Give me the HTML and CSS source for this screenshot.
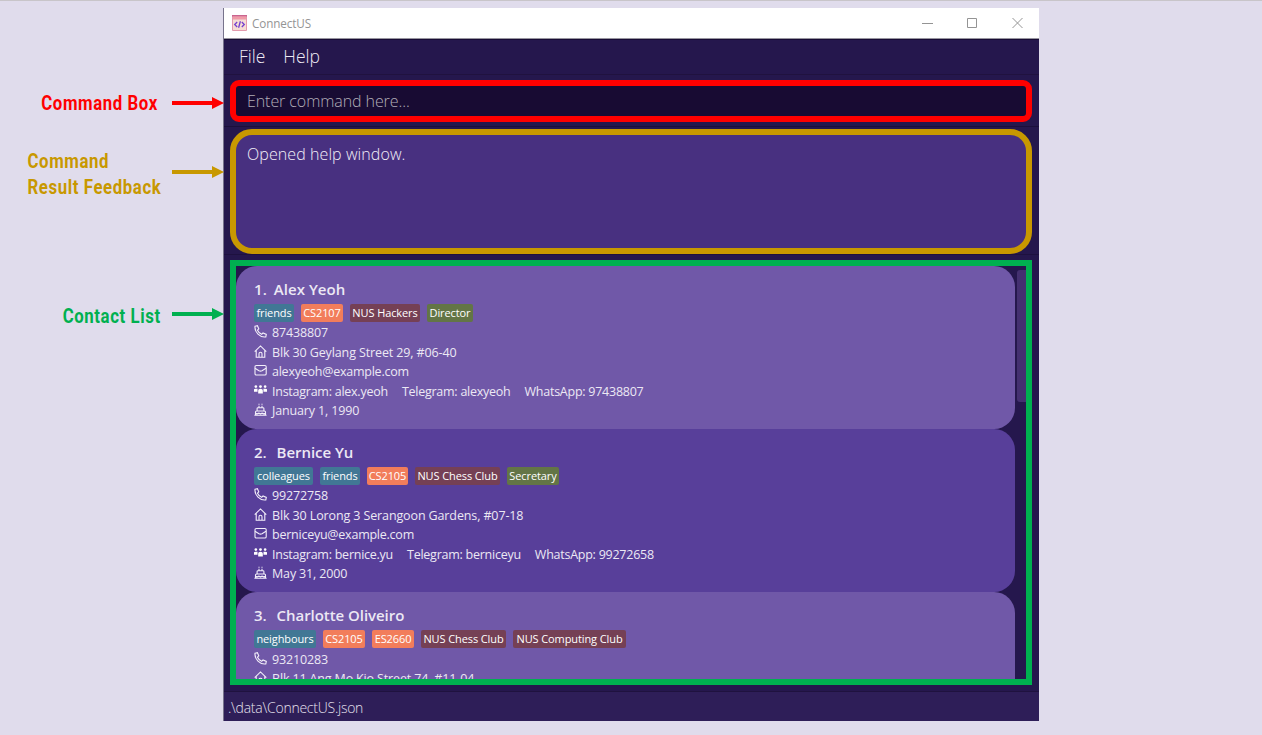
FILE: index.html
```html
<!DOCTYPE html>
<html lang="en">
<head>
<meta charset="utf-8">
<title>ConnectUS</title>
<link rel="stylesheet" href="styles.css">
</head>
<body>
<svg class="defs" width="0" height="0">
  <symbol id="phone" viewBox="0 0 13 13"><path d="M1 1.200 3.400.7 4.800 3.900 3.500 5.200c.8 1.800 2.300 3.300 4.100 4.100L9 8l3.300 1.400-.5 2.500C6 12.700.3 7 1 1.200Z"/></symbol>
  <symbol id="home" viewBox="0 0 13 13"><path d="M.7 6.600 6.500.9l5.800 5.700M2.200 5.400v6.800h8.600V5.400M5 12V8.700a1.500 1.500 0 0 1 3 0V12"/></symbol>
  <symbol id="mail" viewBox="0 0 13 13"><rect x="1" y="1.500" width="11.200" height="9.500" rx="1.300"/><path d="m1 4.300 4 2.400q1.500.8 3 0l4-2.400"/></symbol>
  <symbol id="people" viewBox="0 0 14 13"><g class="solid"><circle cx="2" cy="2.300" r="1.400"/><circle cx="7" cy="2.300" r="1.500"/><circle cx="12" cy="2.300" r="1.400"/><path d="M-.3 7.800V6.200q0-1.700 1.900-1.700h2.200v3.300ZM4.500 9.800V6.500q0-2 2.500-2t2.500 2v3.300ZM10.200 7.800V4.500h2.200q1.900 0 1.900 1.700v1.600Z"/></g></symbol>
  <symbol id="cake" viewBox="0 0 13 13"><path d="M.4 12.300h12.200M1.500 12V9q0-1 1-1h8q1 0 1 1v3M3.100 7.700V5.600q0-.9.900-.9h5q.9 0 .9.900v2.100M1.500 10.200l1.700.6 1.700-.6 1.600.6 1.600-.6 1.700.6 1.700-.6M5 4.300V2.800M8 4.300V2.800M5 1.700V.7M8 1.700V.7"/></symbol>
</svg>

<div class="page">
  <aside class="labels">
    <div class="label label-command"><span class="label-text">Command Box</span><svg class="arrow" viewBox="0 0 52 12"><path d="M0 4h40V0l12 6-12 6V8H0Z"/></svg></div>
    <div class="label label-result"><span class="label-text">Command<br>Result Feedback</span><svg class="arrow" viewBox="0 0 52 12"><path d="M0 4h40V0l12 6-12 6V8H0Z"/></svg></div>
    <div class="label label-list"><span class="label-text">Contact List</span><svg class="arrow" viewBox="0 0 52 12"><path d="M0 4h40V0l12 6-12 6V8H0Z"/></svg></div>
  </aside>

  <main class="window">
    <header class="titlebar">
      <svg class="logo" viewBox="0 0 15 16"><rect width="15" height="16" rx="1" fill="#e39aac"/><rect x="0" y="0" width="15" height="1.500" fill="#c9648f"/><rect x="1" y="1.500" width="13" height="3" fill="#f09aa8"/><rect x="1" y="4.500" width="13" height="10.500" fill="#f6dcd4"/><path d="M5.200 7 2.700 9.500 5.200 12M9.800 7l2.500 2.500L9.800 12M8.400 6.300l-1.800 6.400" fill="none" stroke="#7440cf" stroke-width="1.300"/></svg>
      <span class="title">ConnectUS</span>
      <svg class="controls" viewBox="0 0 102 12"><path d="M0 6.500h11M45.500 1.500h9v9h-9zM90.500 1l10 10M100.500 1l-10 10"/></svg>
    </header>
    <nav class="menubar"><span>File</span><span>Help</span></nav>
    <section class="command-area"><div class="command-box">Enter command here...</div></section>
    <section class="result-area"><div class="result-box">Opened help window.</div></section>
    <section class="list-area">
      <div class="list-box">
        <div class="cards">
          <article class="card">
            <h2 class="name name-first"><span>1.</span><span>Alex Yeoh</span></h2>
            <div class="tags"><span class="tag teal w-friends">friends</span><span class="tag orange">CS2107</span><span class="tag maroon w-hackers">NUS Hackers</span><span class="tag olive w-director">Director</span></div>
            <p class="row"><svg><use href="#phone"/></svg><span>87438807</span></p>
            <p class="row address"><svg><use href="#home"/></svg><span>Blk 30 Geylang Street 29, #06-40</span></p>
            <p class="row email"><svg><use href="#mail"/></svg><span>alexyeoh@example.com</span></p>
            <p class="row socials"><svg><use href="#people"/></svg><span>Instagram: alex.yeoh</span><span>Telegram: alexyeoh</span><span>WhatsApp: 97438807</span></p>
            <p class="row"><svg><use href="#cake"/></svg><span>January 1, 1990</span></p>
          </article>
          <article class="card dark">
            <h2 class="name"><span>2.</span><span>Bernice Yu</span></h2>
            <div class="tags"><span class="tag teal w-colleagues">colleagues</span><span class="tag teal w-friends">friends</span><span class="tag orange w-narrow">CS2105</span><span class="tag maroon w-chess">NUS Chess Club</span><span class="tag olive w-secretary">Secretary</span></div>
            <p class="row"><svg><use href="#phone"/></svg><span>99272758</span></p>
            <p class="row address"><svg><use href="#home"/></svg><span>Blk 30 Lorong 3 Serangoon Gardens, #07-18</span></p>
            <p class="row email"><svg><use href="#mail"/></svg><span>berniceyu@example.com</span></p>
            <p class="row socials"><svg><use href="#people"/></svg><span>Instagram: bernice.yu</span><span>Telegram: berniceyu</span><span>WhatsApp: 99272658</span></p>
            <p class="row"><svg><use href="#cake"/></svg><span>May 31, 2000</span></p>
          </article>
          <article class="card">
            <h2 class="name"><span>3.</span><span>Charlotte Oliveiro</span></h2>
            <div class="tags"><span class="tag teal w-neighbours">neighbours</span><span class="tag orange">CS2105</span><span class="tag orange">ES2660</span><span class="tag maroon w-chess">NUS Chess Club</span><span class="tag maroon w-computing">NUS Computing Club</span></div>
            <p class="row"><svg><use href="#phone"/></svg><span>93210283</span></p>
            <p class="row"><svg><use href="#home"/></svg><span>Blk 11 Ang Mo Kio Street 74, #11-04</span></p>
          </article>
        </div>
        <div class="scroll-thumb"></div>
      </div>
    </section>
    <footer class="statusbar"><span>.\data\ConnectUS.json</span></footer>
  </main>
</div>
</body>
</html>
```
FILE: styles.css
```css
* { box-sizing: border-box; }
body { margin: 0; background: #e0dcec; font-family: "Open Sans", "Noto Sans", sans-serif; }
.defs { display: block; height: 0; }
.page { display: flex; width: 1262px; height: 735px; padding-top: 7px; border-top: 1px solid #c8c5c9; overflow: hidden; }

.labels { width: 224px; margin-right: -1px; display: flex; flex-direction: column; z-index: 1; }
.label { display: flex; align-items: center; justify-content: flex-end; gap: 12px; font: 700 20px/26px Roboto, sans-serif; letter-spacing: .7px; }
.label-text { transform: scaleX(.84); transform-origin: right; white-space: nowrap; }
.arrow { width: 52px; height: 12px; flex: none; fill: currentColor; }
.label-command { color: #ff0000; margin-top: 82px; gap: 14px; }
.label-result { color: #c89800; margin-top: 28px; height: 56px; gap: 11px; }
.label-list { color: #00b050; margin-top: 99px; height: 30px; gap: 11px; }
.label-result .label-text { padding-top: 3px; }
.label-list .label-text { padding-top: 4px; }

.window { width: 816px; height: 713px; display: flex; flex-direction: column; background: #25174d; border-left: 1px solid #77738c; }
.titlebar { height: 31px; background: #fff; border-bottom: 1px solid #98959f; display: flex; align-items: center; padding: 0 15px 0 8px; }
.logo { width: 15px; height: 16px; }
.title { margin: -1px 0 0 5px; font-size: 11.700px; color: #949494; letter-spacing: -.1px; }
.controls { width: 102px; height: 12px; margin-left: auto; fill: none; stroke: #949494; }
.menubar { height: 36px; border-top: 1px solid #170b34; border-bottom: 1px solid #20123f; display: flex; align-items: center; padding: 0 0 2px 15px; gap: 18px; font-size: 17.500px; font-weight: 300; color: #eeeaf5; }
.command-area { height: 52px; padding: 5px 7px 0 6px; border-bottom: 1px solid #1b0f3b; }
.command-box { height: 42px; border: 6px solid #f00; border-radius: 9px; background: #180b33; padding-left: 11px; font-size: 16px; font-weight: 300; line-height: 31px; letter-spacing: -.08px; color: #b2adb8; }
.result-area { height: 128px; padding: 2px 7px 0 6px; border-bottom: 1px solid #1e113f; }
.result-box { height: 125px; border: 6px solid #c89800; border-radius: 22px; background: #483080; padding: 8px 0 0 11px; font-size: 16px; font-weight: 300; line-height: 22px; letter-spacing: .08px; color: #f2eff8; }
.list-area { height: 436px; padding: 5px 7px 0 6px; }
.list-box { height: 425px; border: 6px solid #00b050; overflow: hidden; display: flex; justify-content: space-between; }
.cards { width: 778.500px; }
.card { height: 163.200px; border-radius: 21px; background: #7058a8; padding: 12px 0 0 18px; color: #ece8f4; }
.card.dark { background: #583f9a; }
.name { margin: 0; height: 26px; display: flex; gap: 10px; font-size: 15px; font-weight: 600; line-height: 22px; letter-spacing: -.05px; }
.name-first { gap: 7px; letter-spacing: .05px; }
.tags { display: flex; gap: 7px; height: 18px; margin-bottom: 1px; }
.tag { height: 18px; width: 42px; border-radius: 2px; font-size: 11px; line-height: 18px; text-align: center; white-space: nowrap; letter-spacing: -.1px; color: #fff; }
.teal { background: #417795; }
.orange { background: #f27d5b; }
.maroon { background: #754055; }
.olive { background: #637546; }
.w-narrow { width: 41px; }
.w-friends { width: 40px; }
.w-hackers { width: 70px; }
.w-director { width: 46px; }
.w-colleagues { width: 59px; }
.w-chess { width: 85px; }
.w-secretary { width: 52px; }
.w-neighbours { width: 62px; }
.w-computing { width: 113px; }
.row { margin: 0; height: 19.450px; display: flex; align-items: center; font-size: 12.500px; line-height: 19px; white-space: nowrap; letter-spacing: -.15px; }
.row svg { width: 13px; height: 13px; margin: 0 5px 2px 0; fill: none; stroke: #f3effa; stroke-width: 1.100; overflow: visible; }
.row .solid, .solid { fill: #fff; stroke: none; }
.address { letter-spacing: -.12px; }
.email { letter-spacing: -.24px; }
.socials { gap: 14px; letter-spacing: -.25px; }
.socials svg { margin-right: -9px; }
.scroll-thumb { width: 9px; height: 132px; margin-top: 4px; border-radius: 3px 0 0 3px; background: #443070; }
.statusbar { height: 30px; background: #2e1e58; border-top: 1px solid #1f123f; padding-left: 4px; font-size: 14px; font-weight: 300; line-height: 31px; letter-spacing: -.25px; color: #e5e0ed; }
```
